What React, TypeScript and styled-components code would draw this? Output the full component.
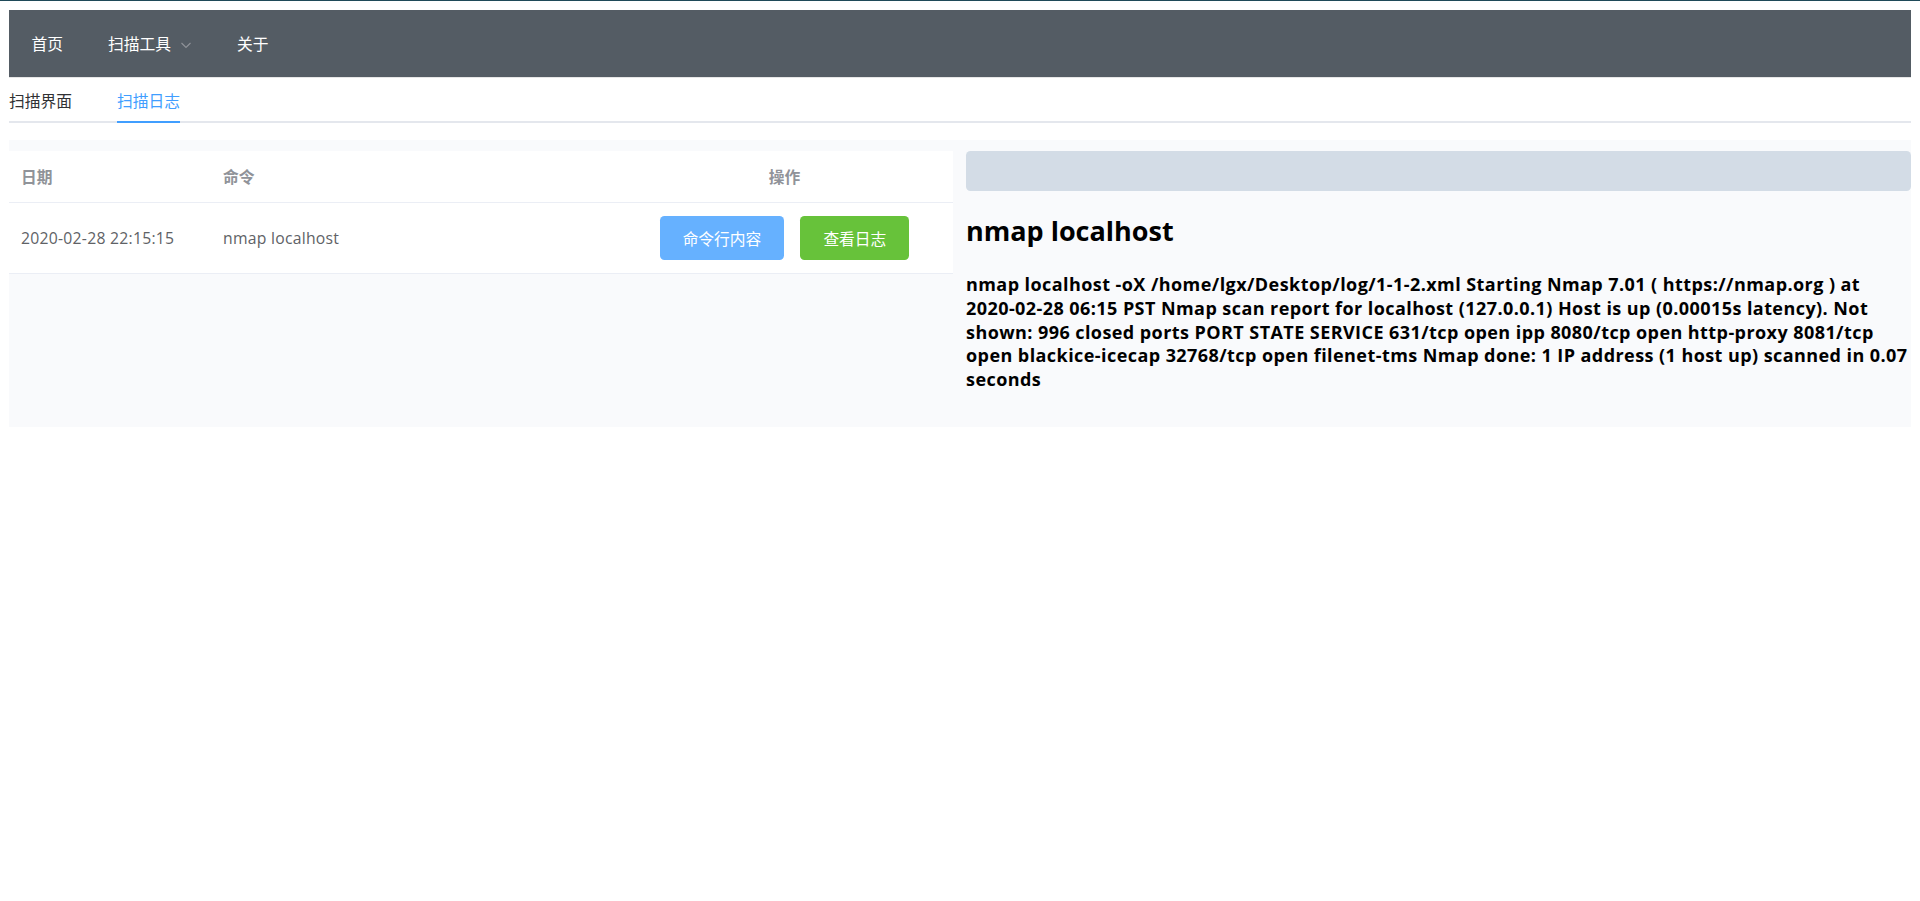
import React from "react";
import styled, { createGlobalStyle } from "styled-components";

const GlobalStyle = createGlobalStyle`
  html, body {
    margin: 0;
    padding: 0;
    background: #ffffff;
  }
  body {
    font-family: "Open Sans", "Noto Sans CJK SC", sans-serif;
    -webkit-font-smoothing: antialiased;
  }
  * { box-sizing: border-box; }
`;

const TopLine = styled.div`
  height: 1px;
  background: #1f4a59;
`;

const Page = styled.div`
  padding: 9px;
`;

const NavBar = styled.nav`
  display: flex;
  align-items: stretch;
  height: 68px;
  background: #545c64;
  border-bottom: 1px solid #e6e6e6;
`;

const MenuItem = styled.div`
  display: flex;
  align-items: center;
  padding: 0 22.5px;
  color: #ffffff;
  font-size: 15.75px;
  font-family: "Noto Sans CJK SC", sans-serif;
  cursor: pointer;
`;

const Arrow = styled.svg`
  margin-left: 9px;
  width: 12px;
  height: 12px;
  margin-top: 2px;
`;

const TabBar = styled.div`
  display: flex;
  height: 45px;
  margin-bottom: 17px;
  border-bottom: 2px solid #e4e7ed;
`;

const TabItem = styled.div<{ $active?: boolean }>`
  height: 45px;
  line-height: 45px;
  margin-bottom: -2px;
  margin-right: 45px;
  font-size: 15.75px;
  font-family: "Noto Sans CJK SC", sans-serif;
  color: ${(p) => (p.$active ? "#409eff" : "#303133")};
  border-bottom: 2px solid ${(p) => (p.$active ? "#409eff" : "transparent")};
  cursor: pointer;
`;

const Content = styled.div`
  display: grid;
  grid-template-columns: 944px 1fr;
  column-gap: 13px;
  align-items: start;
  padding: 11px 0;
  background: #f9fafc;
`;

const Table = styled.div`
  background: #ffffff;
  border-bottom: 1px solid #ebeef5;
`;

const Row = styled.div<{ $head?: boolean }>`
  display: grid;
  grid-template-columns: 202px 405px 1fr;
  align-items: center;
  height: ${(p) => (p.$head ? "52px" : "70px")};
  border-bottom: ${(p) => (p.$head ? "1px solid #ebeef5" : "none")};
  color: ${(p) => (p.$head ? "#909399" : "#606266")};
  font-weight: ${(p) => (p.$head ? 700 : 400)};
  font-size: 15.75px;
  letter-spacing: 0.25px;
`;

const Cell = styled.div<{ $center?: boolean }>`
  padding: 0 12px;
  display: flex;
  align-items: center;
  justify-content: ${(p) => (p.$center ? "center" : "flex-start")};
  gap: 16px;
`;

const HeadText = styled.span`
  font-family: "Noto Sans CJK SC", sans-serif;
  font-weight: 700;
  letter-spacing: 0;
`;

const Button = styled.button<{ $kind: "primary" | "success" }>`
  height: 44px;
  padding: 0 23px;
  border: none;
  border-radius: 4.5px;
  color: #ffffff;
  font-size: 15.75px;
  letter-spacing: 0;
  font-family: "Noto Sans CJK SC", sans-serif;
  background: ${(p) => (p.$kind === "primary" ? "#66b1ff" : "#67c23a")};
  cursor: pointer;
`;

const Detail = styled.div`
  display: flex;
  flex-direction: column;
`;

const GridBar = styled.div`
  height: 40px;
  border-radius: 4.5px;
  background: #d3dce6;
`;

const Title = styled.h2`
  margin: 22px 0 0;
  font-size: 27px;
  line-height: 36px;
  font-weight: 700;
  color: #000000;
`;

const LogText = styled.h4`
  margin: 24px 0;
  font-size: 18px;
  line-height: 23.76px;
  letter-spacing: 0.43px;
  font-weight: 700;
  color: #000000;
`;

const logContent =
  "nmap localhost -oX /home/lgx/Desktop/log/1-1-2.xml Starting Nmap 7.01 ( https://nmap.org ) at 2020-02-28 06:15 PST Nmap scan report for localhost (127.0.0.1) Host is up (0.00015s latency). Not shown: 996 closed ports PORT STATE SERVICE 631/tcp open ipp 8080/tcp open http-proxy 8081/tcp open blackice-icecap 32768/tcp open filenet-tms Nmap done: 1 IP address (1 host up) scanned in 0.07 seconds";

export default function App() {
  return (
    <>
      <GlobalStyle />
      <TopLine />
      <Page>
        <NavBar>
          <MenuItem>首页</MenuItem>
          <MenuItem>
            扫描工具
            <Arrow viewBox="0 0 12 12" fill="none">
              <polyline points="1.5,4 6,8.5 10.5,4" stroke="#909399" strokeWidth="1.1" />
            </Arrow>
          </MenuItem>
          <MenuItem>关于</MenuItem>
        </NavBar>
        <TabBar>
          <TabItem>扫描界面</TabItem>
          <TabItem $active>扫描日志</TabItem>
        </TabBar>
        <Content>
          <Table>
            <Row $head>
              <Cell><HeadText>日期</HeadText></Cell>
              <Cell><HeadText>命令</HeadText></Cell>
              <Cell $center><HeadText>操作</HeadText></Cell>
            </Row>
            <Row>
              <Cell>2020-02-28 22:15:15</Cell>
              <Cell>nmap localhost</Cell>
              <Cell $center>
                <Button $kind="primary">命令行内容</Button>
                <Button $kind="success">查看日志</Button>
              </Cell>
            </Row>
          </Table>
          <Detail>
            <GridBar />
            <Title>nmap localhost</Title>
            <LogText>{logContent}</LogText>
          </Detail>
        </Content>
      </Page>
    </>
  );
}
